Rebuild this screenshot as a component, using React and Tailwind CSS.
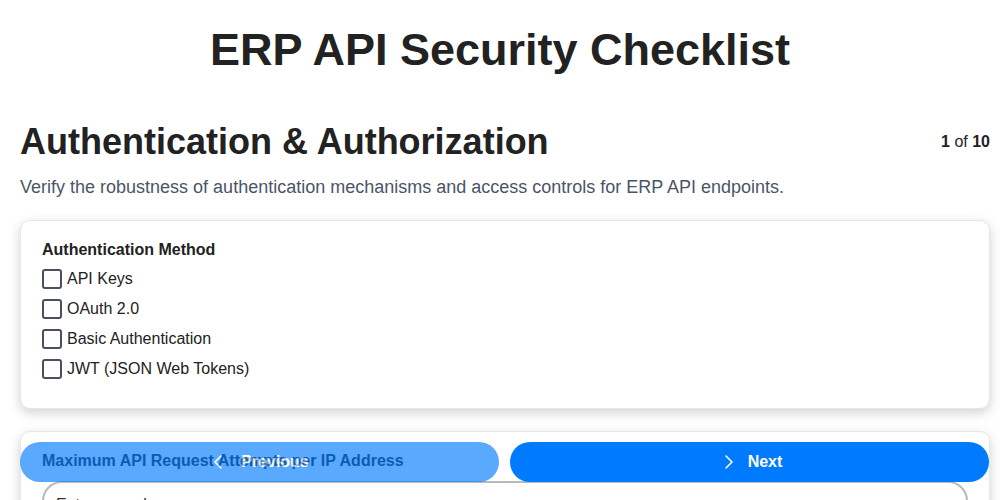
const methods = ['API Keys', 'OAuth 2.0', 'Basic Authentication', 'JWT (JSON Web Tokens)'];

function Chevron({ dir }) {
  return (
    <svg width="8" height="14" viewBox="0 0 8 14" fill="none" stroke="currentColor" strokeWidth="1.6" strokeLinecap="round" strokeLinejoin="round">
      {dir === 'left' ? <polyline points="7,1 1,7 7,13" /> : <polyline points="1,1 7,7 1,13" />}
    </svg>
  );
}

export default function App() {
  return (
    <div className="min-h-screen bg-white pl-5 pr-[10px] pt-[24px] pb-24 text-[#222]" style={{ fontFamily: '"Liberation Sans", Arial, sans-serif' }}>
      <h1 className="-ml-5 -mr-[10px] text-center text-[45px] font-bold leading-[52px] text-[#222]">ERP API Security Checklist</h1>

      <div className="mt-[45px] flex items-center justify-between">
        <h2 className="text-[36px] font-bold leading-[42px] text-[#222]">Authentication &amp; Authorization</h2>
        <span className="text-[16px] text-[#222]">
          <b>1</b> of <b>10</b>
        </span>
      </div>
      <p className="mt-[13px] text-[18px] leading-[22px] text-[#4a5568]">
        Verify the robustness of authentication mechanisms and access controls for ERP API endpoints.
      </p>

      <div className="mt-[22px] flex flex-col gap-[22px]">
        <div className="rounded-[10px] border border-[#e5e7eb] bg-white px-[21px] pt-[19px] pb-[24px] shadow-[0_4px_12px_rgba(0,0,0,0.18)]">
          <div className="text-[16px] font-bold leading-[20px] text-[#222]">Authentication Method</div>
          <div className="mt-[4px] flex flex-col">
            {methods.map((m) => (
              <label key={m} className="flex h-[30px] items-center gap-[5px] text-[16px] text-[#222]">
                <span className="h-[20px] w-[20px] rounded-[3px] border-2 border-[#4b5060] bg-white" />
                {m}
              </label>
            ))}
          </div>
        </div>

        <div className="rounded-[10px] border border-[#e5e7eb] bg-white px-[21px] pt-[19px] pb-6 shadow-[0_4px_12px_rgba(0,0,0,0.18)]">
          <div className="text-[16px] font-bold leading-[20px] text-[#222]">Maximum API Request Attempts per IP Address</div>
          <div className="mt-[10px] rounded-[20px] border-2 border-[#b5b9c0] px-3 py-[10px] text-[16px] text-[#333]">Enter a number</div>
        </div>
      </div>

      <div className="fixed bottom-[18px] left-5 right-[11px] grid grid-cols-2 gap-[11px]">
        <button className="flex h-10 items-center justify-center gap-[19px] rounded-full bg-[#007bff] pl-1 text-[16px] font-bold text-white opacity-65">
          <Chevron dir="left" />
          Previous
        </button>
        <button className="flex h-10 items-center justify-center gap-[15px] rounded-full bg-[#007bff] pl-2 text-[16px] font-bold text-white">
          <Chevron dir="right" />
          Next
        </button>
      </div>
    </div>
  );
}
